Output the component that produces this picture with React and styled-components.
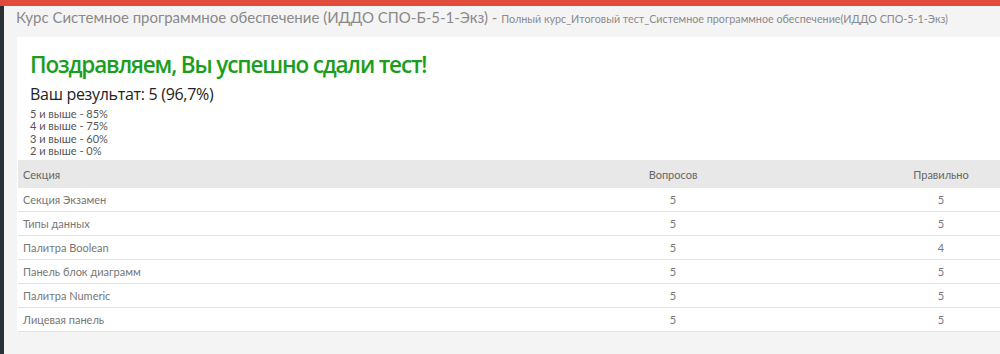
import React from 'react';
import styled, { createGlobalStyle } from 'styled-components';

const GlobalStyle = createGlobalStyle`
  html, body {
    margin: 0;
    padding: 0;
    background-color: #f4f4f4;
    overflow: hidden;
  }
  body {
    font-family: Lato, "Open Sans", "Liberation Sans", sans-serif;
  }
`;

const TopBar = styled.div`
  height: 6px;
  background-color: #e04b3b;
`;

const Layout = styled.div`
  display: flex;
  height: 348px;
`;

const SideStrip = styled.div`
  width: 4px;
  flex-shrink: 0;
  background-color: #2b3035;
`;

const Main = styled.div`
  flex: 1;
  min-width: 0;
  padding-left: 12px;
`;

const Breadcrumb = styled.div`
  height: 25px;
  line-height: 22px;
  white-space: nowrap;
  color: #8a8a8a;
  font-size: 15px;
`;

const SubCrumb = styled.span`
  font-size: 10.75px;
`;

const Card = styled.div`
  margin-top: 6px;
  margin-left: 1px;
  width: 1100px;
  background-color: #fff;
  padding-top: 14px;
`;

const Summary = styled.div`
  padding-left: 13px;
`;

const Heading = styled.h1`
  margin: 0;
  font-family: "Open Sans", Lato, sans-serif;
  font-size: 22.5px;
  line-height: 28px;
  font-weight: 600;
  letter-spacing: -1.15px;
  color: #1c9e1c;
`;

const Result = styled.div`
  margin-top: 5px;
  font-family: "Open Sans", Lato, sans-serif;
  font-size: 16px;
  line-height: 21px;
  letter-spacing: -0.3px;
  color: #222;
`;

const Grades = styled.div`
  margin-top: 3px;
  font-size: 11px;
  line-height: 12.3px;
  color: #555;
`;

const Table = styled.div`
  margin-left: 1px;
  margin-top: 3px;
`;

const Row = styled.div`
  display: grid;
  grid-template-columns: 520px 270px 266px;
  height: ${({ $head }) => ($head ? '28px' : '23px')};
  align-items: center;
  background-color: ${({ $head }) => ($head ? '#e8e8e8' : '#fff')};
  border-bottom: ${({ $head }) => ($head ? 'none' : '1px solid #d9e6e6')};
  font-size: 11px;
  color: ${({ $head }) => ($head ? '#666' : '#777')};
`;

const Cell = styled.div`
  padding-left: ${({ $center }) => ($center ? '0' : '5px')};
  text-align: ${({ $center }) => ($center ? 'center' : 'left')};
  white-space: nowrap;
`;

const rows = [
  ['Секция Экзамен', 5, 5],
  ['Типы данных', 5, 5],
  ['Палитра Boolean', 5, 4],
  ['Панель блок диаграмм', 5, 5],
  ['Палитра Numeric', 5, 5],
  ['Лицевая панель', 5, 5],
];

const grades = ['5 и выше - 85%', '4 и выше - 75%', '3 и выше - 60%', '2 и выше - 0%'];

export default function App() {
  return (
    <>
      <GlobalStyle />
      <TopBar />
      <Layout>
        <SideStrip />
        <Main>
          <Breadcrumb>
            Курс Системное программное обеспечение (ИДДО СПО-Б-5-1-Экз) -{' '}
            <SubCrumb>Полный курс_Итоговый тест_Системное программное обеспечение(ИДДО СПО-5-1-Экз)</SubCrumb>
          </Breadcrumb>
          <Card>
            <Summary>
              <Heading>Поздравляем, Вы успешно сдали тест!</Heading>
              <Result>Ваш результат: 5 (96,7%)</Result>
              <Grades>
                {grades.map((g) => (
                  <div key={g}>{g}</div>
                ))}
              </Grades>
            </Summary>
            <Table>
              <Row $head>
                <Cell>Секция</Cell>
                <Cell $center>Вопросов</Cell>
                <Cell $center>Правильно</Cell>
              </Row>
              {rows.map(([name, total, right]) => (
                <Row key={name}>
                  <Cell>{name}</Cell>
                  <Cell $center>{total}</Cell>
                  <Cell $center>{right}</Cell>
                </Row>
              ))}
            </Table>
          </Card>
        </Main>
      </Layout>
    </>
  );
}
